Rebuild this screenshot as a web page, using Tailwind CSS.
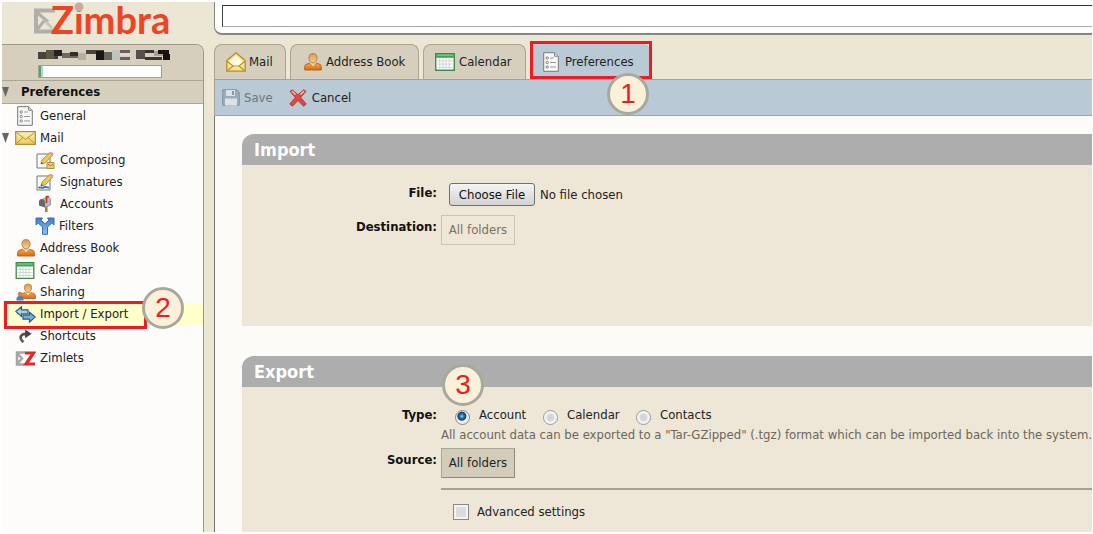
<!DOCTYPE html>
<html lang="en">
<head>
<meta charset="utf-8">
<meta name="viewport" content="width=device-width, initial-scale=1">
<title>Zimbra Preferences</title>
<script src="https://cdn.jsdelivr.net/npm/@tailwindcss/browser@4"></script>
</head>
<body class="h-screen overflow-hidden bg-white pt-[2px] pr-px pb-[2px] pl-[2px] font-['DejaVu_Sans_Condensed','DejaVu_Sans',sans-serif] text-[13px] text-[#222]">

<svg class="absolute h-0 w-0" aria-hidden="true">
  <defs>
    <linearGradient id="gold" x1="0" y1="0" x2="0" y2="1"><stop offset="0" stop-color="#fff3b8"/><stop offset="1" stop-color="#edc75a"/></linearGradient>
    <linearGradient id="skin" x1="0" y1="0" x2="0" y2="1"><stop offset="0" stop-color="#d99a58"/><stop offset="1" stop-color="#f6d29a"/></linearGradient>
    <linearGradient id="coat" x1="0" y1="0" x2="0" y2="1"><stop offset="0" stop-color="#f7a54a"/><stop offset="1" stop-color="#d96a0c"/></linearGradient>
    <linearGradient id="blue" x1="0" y1="0" x2="0" y2="1"><stop offset="0" stop-color="#3c7fc4"/><stop offset="1" stop-color="#8fc3f2"/></linearGradient>
  </defs>
  <symbol id="list" viewBox="0 0 16 20">
    <path d="M.7.7h10.800l3.800 3.600v15H.7z" fill="#f8f8f8" stroke="#777"/>
    <path d="M11.500.7v3.600h3.800" fill="#ddd" stroke="#888"/>
    <g fill="#fff" stroke="#777" stroke-width=".9"><circle cx="4.200" cy="6" r="1.200"/><circle cx="4.200" cy="10.500" r="1.200"/><circle cx="4.200" cy="15" r="1.200"/></g>
    <path d="M7 6h4M7 10.500h6M7 15h6" stroke="#999"/>
  </symbol>
  <symbol id="person" viewBox="0 0 18 18">
    <path d="M.7 17v-3.500c0-2 2-2.500 5-3.200L9 13l3.300-2.700c3 .7 5 1.200 5 3.200V17z" fill="url(#coat)" stroke="#b5651a"/>
    <path d="M6.500 8.500h5v2L9 13.500l-2.500-3z" fill="#f9ddb0"/>
    <path d="M5 4.500C5 1.500 6.500.7 9 .7s4 .8 4 3.800c0 3-1.700 5.500-4 5.500S5 7.500 5 4.500z" fill="url(#skin)" stroke="#b97a35"/>
  </symbol>
  <symbol id="calendar" viewBox="0 0 19 17">
    <path d="M.7.7h17.600v15.600H.7z" fill="#fff" stroke="#3d8a4a" stroke-width="1.300"/>
    <path d="M1 1h17v3.500H1z" fill="#3da451"/><path d="M2 2h15" stroke="#8fd79a"/>
    <path d="M2 7.500h15M2 10.500h15M2 13.500h15M4.500 5v11M7.500 5v11M10.500 5v11M13.500 5v11" stroke="#c3d3c6" stroke-width=".8"/>
  </symbol>
  <symbol id="pencil" viewBox="0 0 18 18">
    <path d="M1 3h13v14H1z" fill="#f9f9f9" stroke="#777"/>
    <path d="m5 13 1-4L14 1.500l2.700 2.500L9 12z" fill="#f2c94c" stroke="#a9832b" stroke-width=".8"/>
    <path d="m13.500 2 1.300-1.600 2.900 2.400-1.400 1.600z" fill="#ef8fb0"/><path d="m5 13 .5-1.900 1.500 1.400z" fill="#333"/>
  </symbol>
</svg>

<div class="flex h-full overflow-hidden bg-[#ece6d4]">

  <aside class="flex w-[202px] shrink-0 flex-col">
    <header class="flex h-[42px] items-start pl-8">
      <a href="#" class="flex items-start" aria-label="Zimbra home">
        <svg class="mt-[6px] h-[26px] w-[21px]" viewBox="0 0 21 26">
          <path d="M21 2.500H2v21h19" fill="none" stroke="#b0aeaa" stroke-width="4"/>
          <path d="m2 3.500 12 10.500M2 23l8-10" stroke="#b0aeaa" stroke-width="3"/>
          <path d="m12 14 6 6" stroke="#c9c6bd" stroke-width="3"/>
        </svg>
        <span class="relative -ml-1 font-[Lato,sans-serif] text-[38px] leading-[34px] font-bold text-[#ee4423]">Zimbra
          <svg class="absolute top-0 left-[22px] h-[11px] w-[12px]" viewBox="0 0 12 11"><path d="M0 0h12v9H0z" fill="#ece6d4"/><circle cx="6" cy="5" r="3.500" fill="#e8a08a" stroke="#b5b2aa" stroke-width="2"/></svg>
        </span>
      </a>
    </header>

    <div class="flex min-h-0 flex-1 flex-col overflow-hidden rounded-tr-lg border-t border-r border-[#9c978a] bg-[#fdfcfa]">
      <div class="flex h-[35px] shrink-0 flex-col items-start bg-[#d6cfbd] pt-1 pl-9">
        <svg class="h-[11px] w-[134px]" viewBox="0 0 134 11" role="img" aria-label="Account name hidden">
          <path d="M0 3h20v7H0z" fill="#46443a"/><path d="M8 1h8v9H8z" fill="#5b5946"/><path d="M16 1h8v6h-8z" fill="#24221c"/>
          <path d="M24 4h16v5H24z" fill="#6f6a5e"/><path d="M32 3h8v4h-8z" fill="#33302a"/>
          <path d="M40 4h8v7h-8z" fill="#b6afa0"/><path d="M48 1h18v4H48z" fill="#4a443d"/><path d="M58 2h8v9h-8z" fill="#1a1614"/>
          <path d="M66 3h8v8h-8z" fill="#68645a"/><path d="M74 1h8v10h-8z" fill="#bfc4bd"/><path d="M82 1h10v3H82zM82 8h10v3H82z" fill="#6b5c62"/>
          <path d="M82 4h10v3H82z" fill="#ded9d0"/><path d="M98 1h9v9h-9z" fill="#57504a"/><path d="M107 1h9v3h-9zM107 8h17v3h-17z" fill="#3b342e"/>
          <path d="M116 2h9v5h-9z" fill="#a8a093"/><path d="M120 1h11v4h-11zM125 5h7v6h-7z" fill="#191310"/>
        </svg>
        <div class="mt-[5px] h-[13px] w-[124px] border border-[#a5a294] bg-white" role="meter" aria-label="Quota" aria-valuenow="3"><div class="h-full border-l-2 border-[#5d9c74] bg-[#9fe0b8]" style="width:3%"></div></div>
      </div>
      <h2 class="flex h-[24px] shrink-0 items-center border-y border-[#aaa594] bg-[#d6cfbd] text-[13px] font-bold text-[#111]">
        <svg class="h-[10px] w-[7px]" viewBox="0 0 7 10"><path d="M0 0h7L3.500 10z" fill="#666"/></svg>
        <span class="pl-3">Preferences</span>
      </h2>
      <nav class="flex flex-col pt-px">
        <a href="#" class="flex h-[22px] items-center gap-[6px] pl-[14px]"><svg class="h-5 w-[18px]"><use href="#list"/></svg>General</a>
        <a href="#" class="flex h-[22px] items-center"><svg class="h-[10px] w-[7px]" viewBox="0 0 7 10"><path d="M0 0h7L3.500 10z" fill="#666"/></svg><svg class="mr-1 ml-[6px] h-[14px] w-[21px]" viewBox="0 0 21 14"><path d="M.7.7h19.600v12.600H.7z" fill="url(#gold)" stroke="#b3913a" stroke-width="1.300"/><path d="m1.500 1.500 9 7 9-7M1.500 12.500l6.500-6M19.500 12.500 13 6.500" fill="none" stroke="#b3913a"/></svg>Mail</a>
        <a href="#" class="flex h-[22px] items-center gap-[5px] pl-[34px]"><svg class="h-[18px] w-[19px]" viewBox="0 0 19 18"><use href="#pencil" width="18" height="18"/><path d="M11 11.500h7v6h-7z" fill="#f0cf6a" stroke="#b3913a"/><path d="m12 13 2.500 2 2.500-2" fill="none" stroke="#a47f28"/></svg>Composing</a>
        <a href="#" class="flex h-[22px] items-center gap-[5px] pl-[34px]"><svg class="h-[18px] w-[19px]" viewBox="0 0 19 18"><use href="#pencil" width="18" height="18"/><path d="M2.500 15c2-2 3 1 5-.5s3 .5 5.500 0" fill="none" stroke="#2f76c8" stroke-width="1.800"/></svg>Signatures</a>
        <a href="#" class="flex h-[22px] items-center gap-[5px] pl-[34px]"><svg class="h-[18px] w-[19px]" viewBox="0 0 19 18"><path d="M9 10h2.500v7H9z" fill="#b07c32"/><path d="M6 4.500 11 2c2-.5 3.500 1 3.500 3.500V10L9 12.500z" fill="#bbb" stroke="#888" stroke-width=".8"/><path d="M3 7c0-2 1-3 2.700-3S9 5.500 9 7.500v5L3 10.500z" fill="#666"/><path d="M10.500 8V1.500H13" fill="none" stroke="#c8372d" stroke-width="1.700"/></svg>Accounts</a>
        <a href="#" class="flex h-[22px] items-center gap-1 pl-[33px]"><svg class="h-[18px] w-5" viewBox="0 0 20 18"><path d="M1 1h6.500L6 3.200l4 3.600 4-3.600L12.500 1H19v7l-2.200-2-4.300 4v7.300h-5V10L3.200 6 1 8z" fill="url(#blue)" stroke="#3471b0"/></svg>Filters</a>
        <a href="#" class="flex h-[22px] items-center gap-[5px] pl-[15px]"><svg class="h-[18px] w-[18px]"><use href="#person"/></svg>Address Book</a>
        <a href="#" class="flex h-[22px] items-center gap-[5px] pl-[13px]"><svg class="h-[17px] w-5"><use href="#calendar"/></svg>Calendar</a>
        <a href="#" class="flex h-[22px] items-center gap-1 pl-[14px]"><svg class="h-[18px] w-5" viewBox="0 0 20 18"><use href="#person" x="4" width="16" height="17"/><path d="M.5 17.500v-2c0-2 2-2.500 3.500-2.500s3.500.5 3.500 2.500v2z" fill="#4b83bd"/><circle cx="4" cy="11" r="2.300" fill="#c08b5a"/></svg>Sharing</a>
        <a href="#" aria-current="page" class="relative flex h-[22px] items-center gap-1 bg-[#ffffcb] pl-[13px]"><svg class="h-[17px] w-[21px]" viewBox="0 0 21 17"><path d="M.8 5.500 6.500.8v3H13v4H6.500v2.700z" fill="#a8cdf0" stroke="#2e5c88" stroke-width="1.200"/><path d="m20.200 11-5.700-4.700v2.900H8v4h6.500v2.900z" fill="#75aee2" stroke="#2e5c88" stroke-width="1.200"/></svg>Import / Export
          <span class="absolute top-[-2px] left-[2px] h-7 w-[143px] border-[3px] border-[#ed1c24]"></span>
          <span class="absolute top-[-16px] left-[140px] flex size-[42px] items-center justify-center rounded-full border-[3px] border-[#aaa89d] bg-[#fbf1da] font-['Liberation_Sans',sans-serif] text-[28px] text-[#ed1c24]">2</span></a>
        <a href="#" class="flex h-[22px] items-center gap-[5px] pl-[15px]"><svg class="h-[14px] w-[18px]" viewBox="0 0 18 16"><path d="M6 15C1 11 2 5.500 9 5.500" fill="none" stroke="#555" stroke-width="3"/><path d="m8 .5 7.500 5L8 10.500z" fill="#444"/></svg>Shortcuts</a>
        <a href="#" class="flex h-[22px] items-center gap-1 pl-[13px]"><svg class="h-[15px] w-[21px]" viewBox="0 0 21 15"><path d="M10 1.500H2v12h7M2 2l5 5.500L2 13" fill="none" stroke="#a6a6a6" stroke-width="2.500"/><path d="M10 2h8.500L11 13h9" fill="none" stroke="#dc2b26" stroke-width="3.200"/></svg>Zimlets</a>
      </nav>
    </div>
  </aside>

  <main class="ml-[10px] flex min-w-0 flex-1 flex-col">
    <div class="h-[33px] shrink-0 rounded-bl-lg border-b-2 border-l border-[#8a877e] bg-white pt-[3px] pl-[7px]">
      <input type="text" aria-label="Search" class="block h-[22px] w-full border border-r-0 border-t-[#333] border-b-[#aaa] border-l-[#444] bg-white px-1 outline-none">
    </div>
    <div role="tablist" class="mt-[9px] flex h-[35px] shrink-0 gap-1">
      <button role="tab" class="flex w-[72px] items-center gap-[3px] rounded-t-lg border border-b-0 border-[#aaa493] bg-[#d7cfbe] pl-[11px]"><svg class="h-5 w-5 shrink-0" viewBox="0 0 20 20"><path d="M.8 8.500 10 .8l9.200 7.700v10.700H.8z" fill="#fbe38d" stroke="#b08c2c" stroke-width="1.300"/><path d="m4 9 6-5.500L16 9v3l-6 3-6-3z" fill="#fffbe8"/><path d="m1 9 6 5h6l6-5M1.500 18.500 7 14M18.500 18.500 13 14" fill="none" stroke="#b8953a" stroke-width="1.200"/></svg>Mail</button>
      <button role="tab" class="flex w-[129px] items-center gap-1 rounded-t-lg border border-b-0 border-[#aaa493] bg-[#d7cfbe] pl-[13px]"><svg class="h-[18px] w-[18px] shrink-0"><use href="#person"/></svg>Address Book</button>
      <button role="tab" class="flex w-[103px] items-center gap-1 rounded-t-lg border border-b-0 border-[#aaa493] bg-[#d7cfbe] pl-[11px]"><svg class="h-[18px] w-5 shrink-0"><use href="#calendar"/></svg>Calendar</button>
      <button role="tab" aria-selected="true" class="relative flex w-[121px] items-center gap-[5px] rounded-t-lg bg-[#bac9d6] pl-[12px]"><svg class="h-5 w-[18px] shrink-0"><use href="#list"/></svg>Preferences
        <span class="absolute top-[-3px] left-0 h-[38px] w-[122px] border-[3px] border-[#ed1c24]"></span>
        <span class="absolute top-[29px] left-[77px] z-10 flex size-[42px] items-center justify-center rounded-full border-[3px] border-[#aaa89d] bg-[#fbf1da] font-['Liberation_Sans',sans-serif] text-[28px] text-[#ed1c24]">1</span></button>
    </div>
    <div role="toolbar" class="flex h-[37px] shrink-0 items-center border-y border-l border-[#a3a39d] bg-[#bac9d6] pl-[7px]">
      <button class="flex items-center gap-1 text-[#6b757c]" disabled><svg class="h-[17px] w-[18px]" viewBox="0 0 18 17"><path d="M.7.7h14l2.600 2.500v13H.7z" fill="#9aabb9" stroke="#8394a2"/><path d="M4 1h9v6H4z" fill="#d8e1e8"/><path d="M3 9.500h12v7H3z" fill="#dce3e8"/><path d="M10 2h2v4h-2z" fill="#8a9aa8"/></svg>Save</button>
      <button class="ml-4 flex items-center gap-[5px]"><svg class="h-[18px] w-[18px]" viewBox="0 0 18 18"><path d="m3.500.8 5.500 5 5.500-5 2.500 1.500-5.300 6.200 5.500 6.500-2.700 2.200-5.500-5.700-5.500 5.700L.8 15l5.500-6.500L1 2.300z" fill="#db4a43" stroke="#b02d2b" stroke-width=".8"/><path d="m3 2 3.500 3.500M15 2l-3.500 3.500" fill="none" stroke="#f4c2b8" stroke-width="1.500"/></svg>Cancel</button>
    </div>

    <div class="flex min-h-0 flex-1 flex-col gap-[30px] overflow-hidden border-l border-[#77756e] bg-[#fcfbf8] pt-[18px] pl-[27px]">
      <section class="h-[192px] shrink-0 overflow-hidden rounded-tl-xl bg-[#eee6d6]">
        <h1 class="flex h-[31px] items-center bg-[#adadad] pl-3 text-[18px] font-bold text-white">Import</h1>
        <div class="grid grid-cols-[195px_1fr] gap-x-1 pt-[18px]">
          <label for="file" class="h-[32px] text-right text-[13px] font-bold text-[#111]">File:</label>
          <input id="file" type="file" class="ml-2 h-[23px] text-[13px] file:mr-[5px] file:h-[23px] file:w-[86px] file:rounded-[3px] file:border file:border-solid file:border-[#707070] file:bg-linear-to-b file:from-[#f5f5f5] file:to-[#d2d2d2] file:p-0 file:text-[13px] file:text-[#111]">
          <label for="dest" class="pt-[2px] text-right text-[13px] font-bold text-[#111]">Destination:</label>
          <button id="dest" class="h-[30px] w-[74px] border border-[#ccc5b3] text-[#77736a]">All folders</button>
        </div>
      </section>

      <section class="flex-1 rounded-tl-xl bg-[#eee6d6]">
        <h1 class="relative flex h-[31px] items-center rounded-tl-xl bg-[#adadad] pl-3 text-[18px] font-bold text-white">Export
          <span class="absolute top-[8px] left-[200px] flex size-[42px] items-center justify-center rounded-full border-[3px] border-[#aaa89d] bg-[#fbf1da] font-['Liberation_Sans',sans-serif] text-[28px] font-normal text-[#ed1c24]">3</span></h1>
        <div class="grid grid-cols-[195px_1fr] gap-x-1 pt-[18px]">
          <span id="type" class="text-right text-[13px] font-bold text-[#111]">Type:</span>
          <div>
            <div role="radiogroup" aria-labelledby="type" class="flex h-5 items-center pl-[14px]">
              <label class="flex w-[88px] items-center gap-[9px]"><input type="radio" name="type" checked class="mt-1 size-[15px] appearance-none rounded-full border border-[#888] bg-[#eee] checked:bg-[radial-gradient(circle_at_45%_40%,#9bd8f5_0,#2678b5_2px,#173f67_4px,#eee_5px)]">Account</label>
              <label class="flex w-[93px] items-center gap-[9px]"><input type="radio" name="type" class="mt-1 size-[15px] appearance-none rounded-full border border-[#999] bg-[radial-gradient(circle,#d6d6d6_0,#d6d6d6_3px,#f5f5f5_5px)]">Calendar</label>
              <label class="flex items-center gap-[9px]"><input type="radio" name="type" class="mt-1 size-[15px] appearance-none rounded-full border border-[#999] bg-[radial-gradient(circle,#d6d6d6_0,#d6d6d6_3px,#f5f5f5_5px)]">Contacts</label>
            </div>
            <p class="h-[23px] leading-5 whitespace-nowrap text-[#6b675e]">All account data can be exported to a "Tar-GZipped" (.tgz) format which can be imported back into the system.</p>
          </div>
          <label for="source" class="pt-[2px] text-right text-[13px] font-bold text-[#111]">Source:</label>
          <button id="source" class="h-[30px] w-[74px] border border-[#8c887d] border-t-[#aaa698] border-l-[#aaa698] bg-[#d4ccbb]">All folders</button>
          <div class="col-start-2">
            <hr class="mt-[10px] border-t-2 border-[#a5a195]">
            <label class="mt-3 ml-3 flex items-center gap-2"><input type="checkbox" class="size-4 appearance-none border border-[#888] bg-[#dcdcdc] shadow-[inset_0_0_0_2px_#f4f4f4]">Advanced settings</label>
          </div>
        </div>
      </section>
    </div>
  </main>
</div>
</body>
</html>
